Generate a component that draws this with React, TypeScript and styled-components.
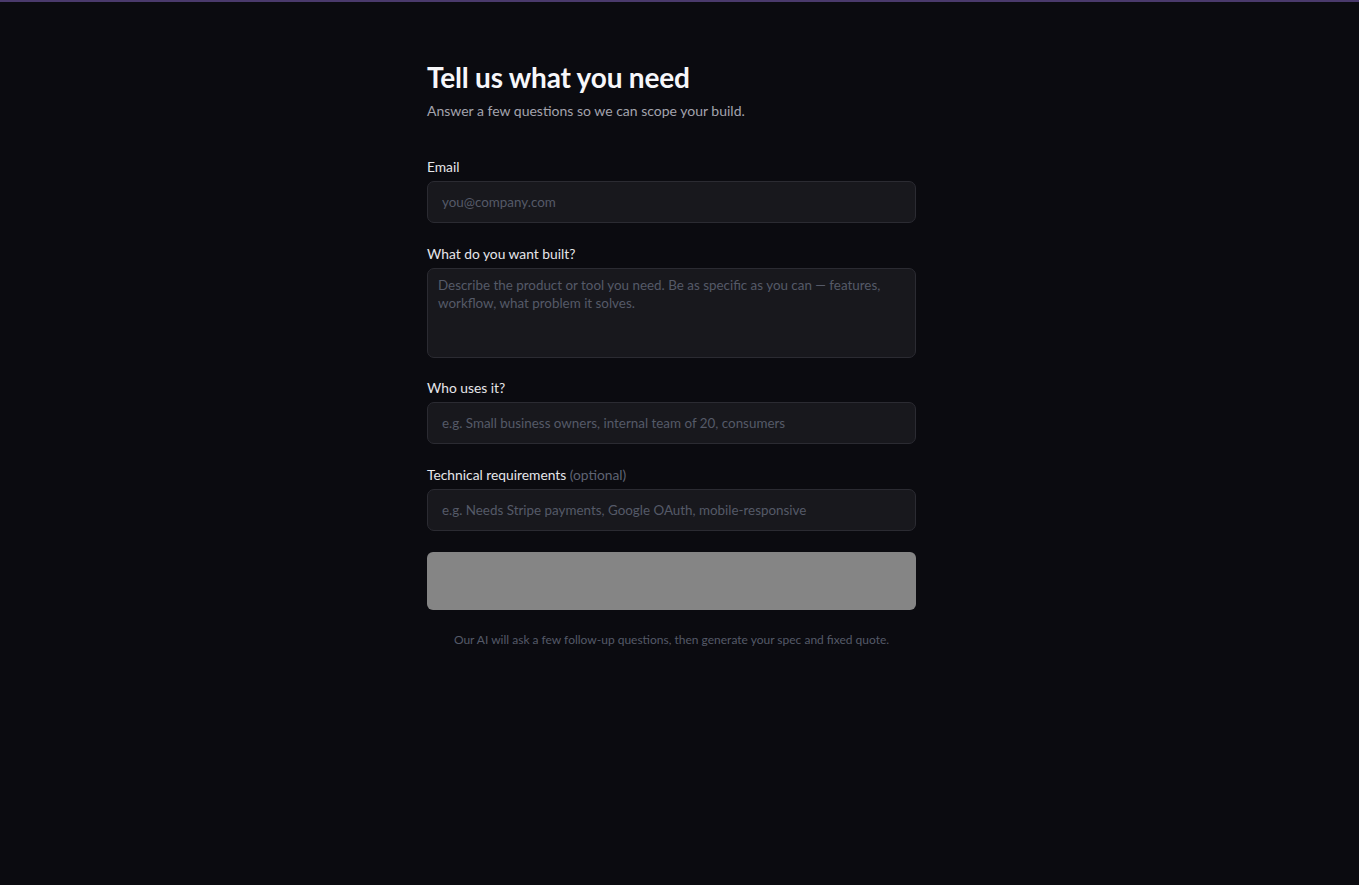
import styled, { createGlobalStyle } from 'styled-components'

const GlobalStyle = createGlobalStyle`
  html, body {
    margin: 0;
    padding: 0;
    background: #0b0b10;
  }
  body {
    font-family: Lato, "Noto Sans", "Liberation Sans", sans-serif;
    color: #ececf0;
  }
  * { box-sizing: border-box; }
`

const Page = styled.div`
  min-height: 885px;
  border-top: 2px solid #4a3a6c;
  padding: 58px 16px 0 0;
  display: flex;
  justify-content: center;
`

const Form = styled.form`
  width: 489px;
  display: flex;
  flex-direction: column;
`

const Title = styled.h1`
  margin: 0;
  font-size: 28px;
  font-weight: 700;
  line-height: 34px;
  color: #f7f7fa;
  letter-spacing: -0.2px;
`

const Subtitle = styled.p`
  margin: 8px 0 0;
  font-size: 14px;
  line-height: 18px;
  color: #a3a3ad;
`

const Fields = styled.div`
  margin-top: 38px;
  display: flex;
  flex-direction: column;
  gap: 21.5px;
`

const Field = styled.label`
  display: flex;
  flex-direction: column;
  gap: 5px;
`

const LabelText = styled.span`
  font-size: 13.8px;
  line-height: 18px;
  color: #e6e6ea;
`

const Optional = styled.span`
  color: #5f6373;
`

const inputBase = `
  width: 100%;
  background: #18181d;
  border: 1px solid #2b2b32;
  border-radius: 7px;
  color: #e6e6ea;
  font-family: inherit;
  font-size: 13.4px;
  outline: none;
  &::placeholder { color: #555a68; }
`

const Input = styled.input`
  ${inputBase}
  height: 42px;
  padding: 0 14px;
`

const TextArea = styled.textarea`
  ${inputBase}
  height: 90px;
  padding: 7px 10px;
  line-height: 18px;
  resize: none;
`

const Submit = styled.button`
  margin-top: 21px;
  height: 58px;
  width: 100%;
  border: none;
  border-radius: 6px;
  background: #858585;
  cursor: not-allowed;
`

const Note = styled.p`
  margin: 23px 0 0;
  text-align: center;
  font-size: 12px;
  line-height: 14px;
  color: #555a68;
`

export default function App() {
  return (
    <>
      <GlobalStyle />
      <Page>
        <Form onSubmit={(e) => e.preventDefault()}>
          <Title>Tell us what you need</Title>
          <Subtitle>Answer a few questions so we can scope your build.</Subtitle>
          <Fields>
            <Field>
              <LabelText>Email</LabelText>
              <Input type="email" placeholder="you@company.com" />
            </Field>
            <Field>
              <LabelText>What do you want built?</LabelText>
              <TextArea placeholder="Describe the product or tool you need. Be as specific as you can — features, workflow, what problem it solves." />
            </Field>
            <Field>
              <LabelText>Who uses it?</LabelText>
              <Input placeholder="e.g. Small business owners, internal team of 20, consumers" />
            </Field>
            <Field>
              <LabelText>
                Technical requirements <Optional>(optional)</Optional>
              </LabelText>
              <Input placeholder="e.g. Needs Stripe payments, Google OAuth, mobile-responsive" />
            </Field>
          </Fields>
          <Submit type="submit" disabled />
          <Note>Our AI will ask a few follow-up questions, then generate your spec and fixed quote.</Note>
        </Form>
      </Page>
    </>
  )
}
